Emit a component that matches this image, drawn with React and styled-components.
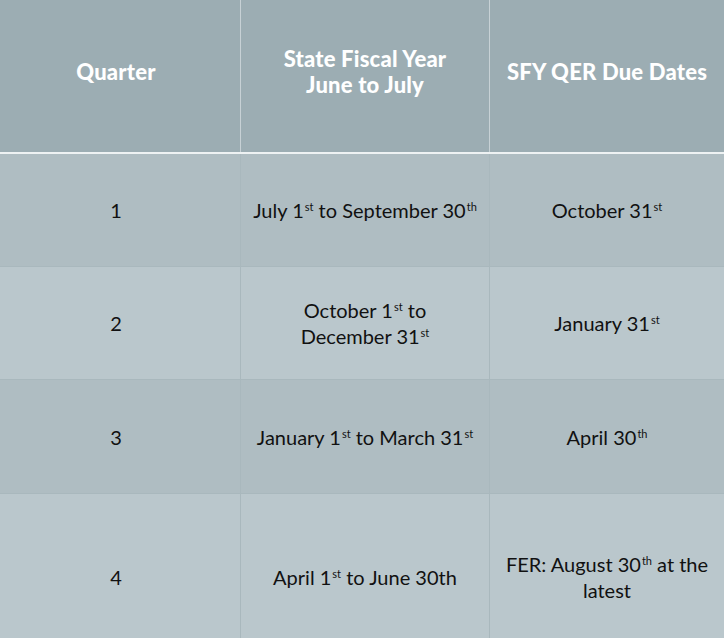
import React from "react";
import styled, { createGlobalStyle } from "styled-components";

const GlobalStyle = createGlobalStyle`
  html, body {
    margin: 0;
    padding: 0;
    background: #b9c6cb;
    overflow: hidden;
  }
`;

// each part: [text, superscript, break after]
const rows = [
  {
    quarter: "1",
    year: [["July 1", "st"], [" to September 30", "th"]],
    due: [["October 31", "st"]],
  },
  {
    quarter: "2",
    year: [["October 1", "st"], [" to", "", true], ["December 31", "st"]],
    due: [["January 31", "st"]],
  },
  {
    quarter: "3",
    year: [["January 1", "st"], [" to March 31", "st"]],
    due: [["April 30", "th"]],
  },
  {
    quarter: "4",
    year: [["April 1", "st"], [" to June 30th", ""]],
    due: [["FER: August 30", "th"], [" at the", "", true], ["latest", ""]],
  },
];

const Text = ({ parts }) => (
  <span>
    {parts.map(([t, sup, br], i) => (
      <React.Fragment key={i}>
        {t}
        {sup && <Sup>{sup}</Sup>}
        {br && <br />}
      </React.Fragment>
    ))}
  </span>
);

const App = () => {
  return (
    <>
      <GlobalStyle />
      <Table>
        <HeadRow>
          <HeadCell>
            <span>Quarter</span>
          </HeadCell>
          <HeadCell>
            <span>
              State Fiscal Year
              <br />
              June to July
            </span>
          </HeadCell>
          <HeadCell>
            <span>SFY QER Due Dates</span>
          </HeadCell>
        </HeadRow>
        {rows.map((r, i) => (
          <Row key={r.quarter} $even={i % 2 === 1} $last={i === rows.length - 1}>
            <Cell>
              <span>{r.quarter}</span>
            </Cell>
            <Cell>
              <Text parts={r.year} />
            </Cell>
            <Cell>
              <Text parts={r.due} />
            </Cell>
          </Row>
        ))}
      </Table>
    </>
  );
};

const Table = styled.div`
  width: 724px;
  height: 638px;
  overflow: hidden;
  display: grid;
  grid-template-rows: 154px 113px 113px 114px 166px;
  font-family: "Lato", "Liberation Sans", sans-serif;
`;

const HeadRow = styled.div`
  display: grid;
  grid-template-columns: 240px 249px 1fr;
  background: #9cadb3;
  border-bottom: 2px solid #eef2f3;
`;

const HeadCell = styled.div`
  display: flex;
  align-items: center;
  justify-content: center;
  text-align: center;
  color: #ffffff;
  font-weight: 900;
  font-size: 22px;
  line-height: 26px;
  letter-spacing: 0.2px;
  padding-bottom: 8px;
  &:first-child {
    padding-right: 8px;
  }
  & + & {
    border-left: 1px solid #c7d1d5;
  }
`;

const Row = styled.div`
  display: grid;
  grid-template-columns: 240px 249px 1fr;
  background: ${(p) => (p.$even ? "#bac7cc" : "#afbdc2")};
  border-bottom: ${(p) => (p.$last ? "none" : "1px solid #a9b8bd")};
`;

const Cell = styled.div`
  display: flex;
  align-items: center;
  justify-content: center;
  text-align: center;
  color: #111;
  font-size: 20px;
  line-height: 26px;
  padding: 0 6px;
  &:first-child {
    padding-right: 14px;
  }
  & + & {
    border-left: 1px solid #a9b8bd;
  }
`;

const Sup = styled.sup`
  font-size: 11px;
  line-height: 0;
  vertical-align: 7px;
  margin-left: 1px;
`;

export default App;
